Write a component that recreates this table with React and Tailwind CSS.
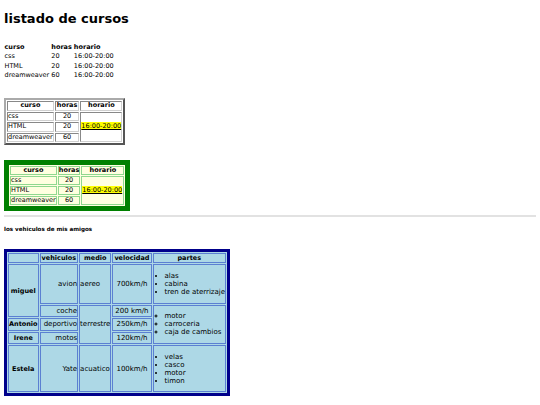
export default function App() {
  const t1 = 'px-[0.5px] py-[0.5px] leading-[7.6px] text-left'
  const c2 = 'border border-t-[#888] border-l-[#888] border-r-[#d0d0d0] border-b-[#d0d0d0] px-0 py-0 leading-[7.5px]'
  const c3 = 'border border-[#8fd88f] px-0 py-0 leading-[7px]'
  const c4 = 'border border-[#5b80d2] px-0 py-0 leading-[8.1px]'
  const h4 = c4 + ' text-[6.5px]'
  const hi = <span className="bg-[#ffff00] underline text-black">16:00-20:00</span>

  return (
    <div className="font-['DejaVu_Sans',Verdana,sans-serif] text-[6.5px] text-black bg-white min-h-[405px] px-[4px] pt-px">
      <h1 className="text-[13px] font-bold leading-[15px] mt-[10px]">listado de cursos</h1>

      <table className="mt-[16px] border-separate border-spacing-[1px] -ml-px">
        <tbody>
          <tr>
            <th className={t1}>curso</th>
            <th className={t1}>horas</th>
            <th className={t1}>horario</th>
          </tr>
          <tr><td className={t1}>css</td><td className={t1}>20</td><td className={t1}>16:00-20:00</td></tr>
          <tr><td className={t1}>HTML</td><td className={t1}>20</td><td className={t1}>16:00-20:00</td></tr>
          <tr><td className={t1}>dreamweaver</td><td className={t1}>60</td><td className={t1}>16:00-20:00</td></tr>
        </tbody>
      </table>

      <table className="mt-[17px] border-2 border-t-[#aaa] border-l-[#aaa] border-r-[#555] border-b-[#555] border-separate border-spacing-[1px] bg-white">
        <tbody>
          <tr>
            <th className={c2 + ' w-[44px]'}>curso</th>
            <th className={c2 + ' px-px'}>horas</th>
            <th className={c2 + ' w-[42px]'}>horario</th>
          </tr>
          <tr>
            <td className={c2}>css</td>
            <td className={c2 + ' text-center'}>20</td>
            <td className={c2} rowSpan={3}>{hi}</td>
          </tr>
          <tr><td className={c2}>HTML</td><td className={c2 + ' text-center'}>20</td></tr>
          <tr><td className={c2}>dreamweaver</td><td className={c2 + ' text-center'}>60</td></tr>
        </tbody>
      </table>

      <table className="mt-[15px] border-[5px] border-[#008000] border-separate border-spacing-[1px] bg-[#ffffe0]">
        <tbody>
          <tr>
            <th className={c3 + ' w-[46px]'}>curso</th>
            <th className={c3}>horas</th>
            <th className={c3 + ' w-[43px]'}>horario</th>
          </tr>
          <tr>
            <td className={c3}>css</td>
            <td className={c3 + ' text-center'}>20</td>
            <td className={c3} rowSpan={3}>{hi}</td>
          </tr>
          <tr><td className={c3}>HTML</td><td className={c3 + ' text-center'}>20</td></tr>
          <tr><td className={c3}>dreamweaver</td><td className={c3 + ' text-center'}>60</td></tr>
        </tbody>
      </table>

      <hr className="mt-[4px] border-0 h-[2px] bg-[#e2e2e2]" />

      <h5 className="text-[5.6px] font-bold leading-[7px] mt-[9px]">los vehiculos de mis amigos</h5>

      <table className="mt-[16px] text-[7px] border-[3px] border-[#00008b] border-separate border-spacing-[1px] bg-[#add8e6]">
        <tbody>
          <tr>
            <th className={h4}></th>
            <th className={h4 + ' px-px'}>vehiculos</th>
            <th className={h4}>medio</th>
            <th className={h4 + ' px-px'}>velocidad</th>
            <th className={h4}>partes</th>
          </tr>
          <tr>
            <th className={h4} rowSpan={2}>miguel</th>
            <td className={c4 + ' text-right'}>avion</td>
            <td className={c4 + ' text-left'}>aereo</td>
            <td className={c4 + ' text-center'}>700km/h</td>
            <td className={c4 + ' pl-px'}>
              <ul className="list-disc list-inside my-[6.5px] pl-0">
                <li>alas</li>
                <li>cabina</li>
                <li>tren de aterrizaje</li>
              </ul>
            </td>
          </tr>
          <tr>
            <td className={c4 + ' text-right'}>coche</td>
            <td className={c4} rowSpan={3}>terrestre</td>
            <td className={c4 + ' text-center'}>200 km/h</td>
            <td className={c4 + ' pl-px'} rowSpan={3}>
              <ul className="list-[circle] list-inside my-[6.5px] pl-0">
                <li>motor</li>
                <li>carroceria</li>
                <li>caja de cambios</li>
              </ul>
            </td>
          </tr>
          <tr>
            <th className={h4}>Antonio</th>
            <td className={c4 + ' text-right'}>deportivo</td>
            <td className={c4 + ' text-center'}>250km/h</td>
          </tr>
          <tr>
            <th className={h4}>Irene</th>
            <td className={c4 + ' text-right'}>motos</td>
            <td className={c4 + ' text-center'}>120km/h</td>
          </tr>
          <tr>
            <th className={h4}>Estela</th>
            <td className={c4 + ' text-right'}>Yate</td>
            <td className={c4}>acuatico</td>
            <td className={c4 + ' text-center'}>100km/h</td>
            <td className={c4 + ' pl-px'}>
              <ul className="list-disc list-inside my-[6.5px] pl-0">
                <li>velas</li>
                <li>casco</li>
                <li>motor</li>
                <li>timon</li>
              </ul>
            </td>
          </tr>
        </tbody>
      </table>
    </div>
  )
}
